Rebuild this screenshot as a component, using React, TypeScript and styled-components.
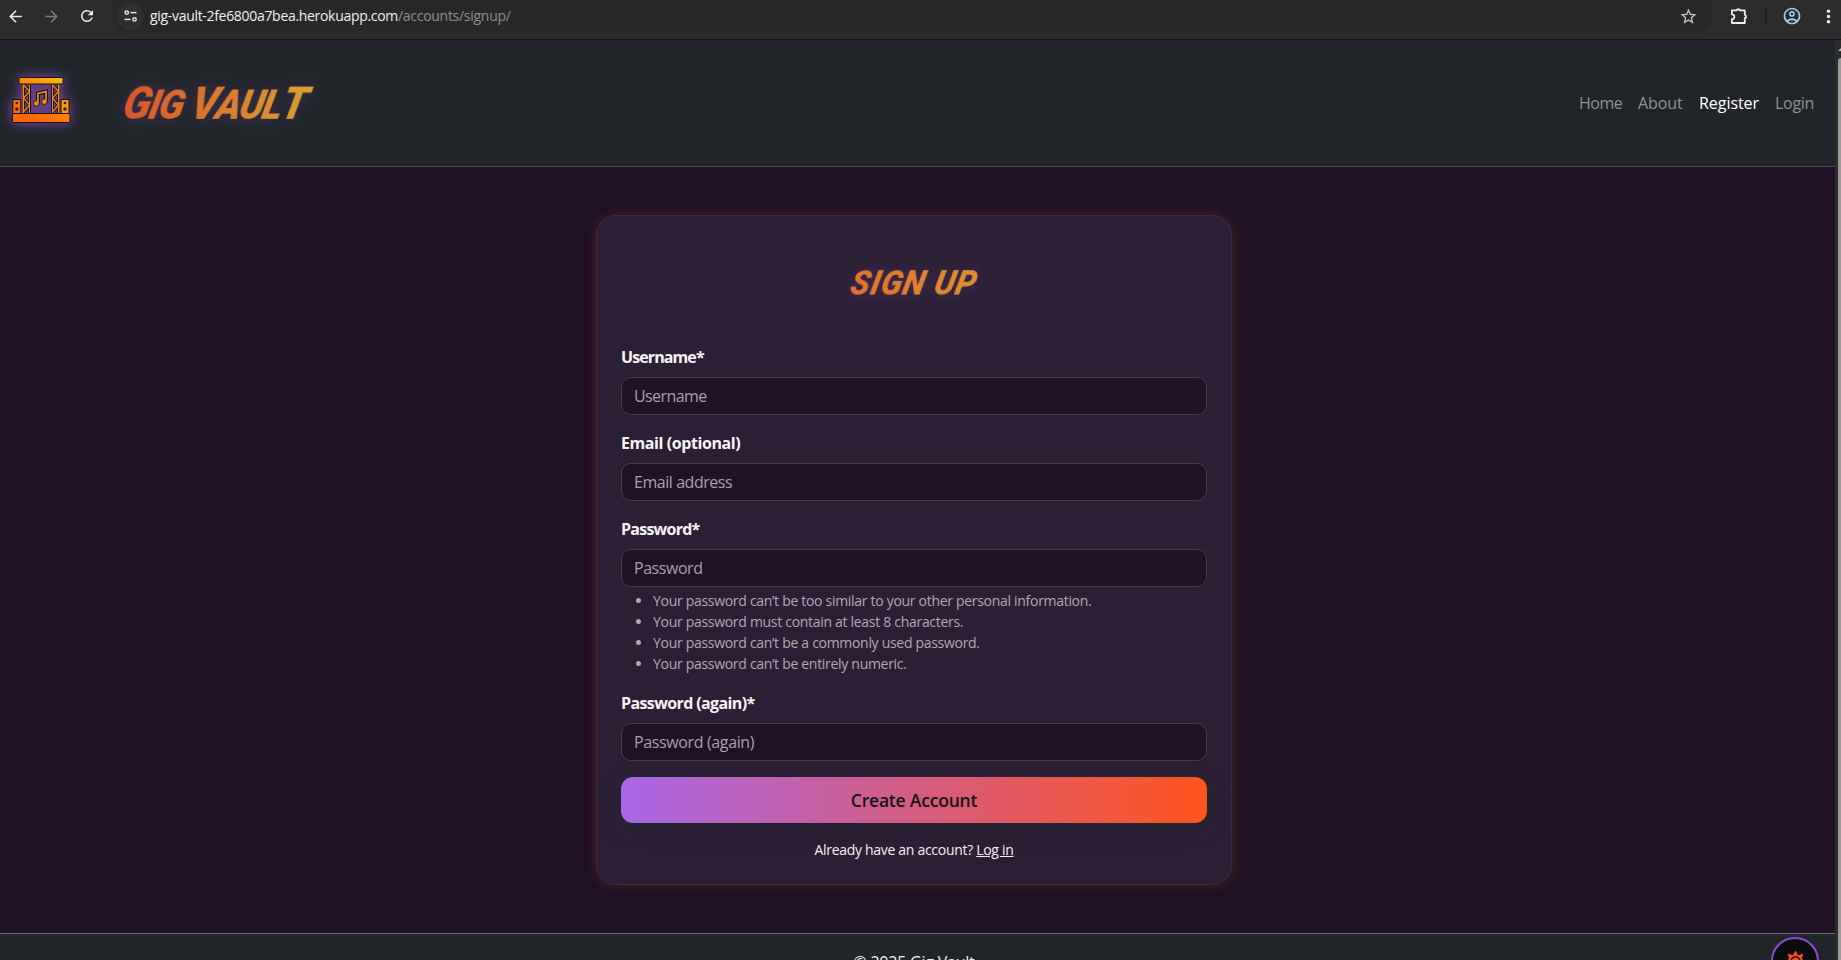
import React from 'react';
import styled, { createGlobalStyle } from 'styled-components';
import { MdArrowBack, MdArrowForward, MdRefresh, MdStarBorder, MdOutlineAccountCircle, MdMoreVert } from 'react-icons/md';
import { FaSun } from 'react-icons/fa';

const GlobalStyle = createGlobalStyle`
  *, *::before, *::after { box-sizing: border-box; }
  body { margin: 0; overflow: hidden; background: #1f1126; font-family: 'Open Sans', 'Noto Sans', sans-serif; }
`;

const Window = styled.div`
  position: relative;
  display: flex;
  flex-direction: column;
  height: 960px;
  overflow: hidden;
  font-size: 16px;
  line-height: 24px;
  color: #f3eff5;
`;

/* Browser toolbar */
const Toolbar = styled.div`
  display: flex;
  height: 40px;
  flex: none;
  background: #2c2c2c;
  border-bottom: 1px solid #151515;
`;
const ToolButton = styled.span<{ $w: number; $color?: string }>`
  display: flex;
  align-items: center;
  justify-content: center;
  flex: none;
  width: ${p => p.$w}px;
  height: 32px;
  color: ${p => p.$color || '#e8e8e8'};
`;
const Leading = styled.div`
  display: flex;
  width: 113px;
  flex: none;
`;
const AddressBar = styled.div`
  display: flex;
  align-items: center;
  flex: none;
  width: 1599px;
  height: 33px;
  padding: 0 14px 1px 4px;
  background: #282828;
  border-radius: 0 0 17px 17px;
`;
const SiteInfo = styled.span`
  display: flex;
  align-items: center;
  justify-content: center;
  width: 27px;
  height: 27px;
  margin-right: 6px;
  border-radius: 50%;
  background: #2f2f2f;
`;
const Url = styled.span`
  flex: 1;
  font-size: 14px;
  letter-spacing: -0.31px;
  color: #f0f0f0;
`;
const UrlPath = styled.span`
  color: #8f8f8f;
  letter-spacing: -0.28px;
`;
const Divider = styled.span`
  width: 2px;
  height: 16px;
  flex: none;
  margin-top: 8px;
  background: #202020;
`;

/* Page */
const Viewport = styled.div`
  display: flex;
  height: 920px;
`;
const Page = styled.div`
  display: flex;
  flex-direction: column;
  width: 1835px;
  height: 920px;
`;
const Scrollbar = styled.div`
  display: flex;
  flex-direction: column;
  align-items: flex-end;
  width: 6px;
  overflow: hidden;
  background: #2c2c2c;
`;
const ScrollArrow = styled.svg`
  width: 3px;
  height: 3px;
  margin: 8px 0 7px;
`;
const ScrollThumb = styled.div`
  width: 3px;
  flex: 1;
  border-top-left-radius: 3px;
  background: #9c9896;
`;

const Header = styled.header`
  display: flex;
  align-items: center;
  height: 127px;
  flex: none;
  padding: 0 21px 0 0;
  background: #212529;
  border-bottom: 1px solid #495057;
`;
const StageLogo = styled.svg`
  width: 84px;
  height: 80px;
  flex: none;
  margin-top: -6px;
  overflow: visible;
  filter: drop-shadow(0 0 6px rgba(146, 78, 214, 0.85));
`;
const Display = styled.span<{ $size: number; $space: string; $from: string; $to: string }>`
  display: inline-block;
  font-family: Roboto, 'Open Sans', sans-serif;
  font-weight: 900;
  font-style: italic;
  font-size: ${p => p.$size}px;
  line-height: 1.3;
  letter-spacing: ${p => p.$space};
  color: transparent;
  background: linear-gradient(90deg, ${p => p.$from}, ${p => p.$to});
  background-clip: text;
  -webkit-background-clip: text;
  transform: skewX(-12deg) scaleY(1.08);
  filter: drop-shadow(0 0 7px rgba(110, 70, 160, 0.35));
  padding: 0 8px;
  white-space: nowrap;
`;
const Brand = styled.div`
  margin: 2px auto 0 32px;
`;
const Big = styled.span`
  font-size: 1.1em;
`;
const Nav = styled.nav`
  display: flex;
  gap: 16px;
`;
const NavLink = styled.a<{ $w: number; $ls: number; $active?: boolean }>`
  width: ${p => p.$w}px;
  letter-spacing: ${p => p.$ls}px;
  white-space: nowrap;
  color: ${p => (p.$active ? '#ffffff' : '#909294')};
`;

const Main = styled.main`
  display: flex;
  justify-content: center;
  align-items: flex-start;
  height: 766px;
  flex: none;
  padding: 48px 7px 0 0;
  background: #1f1126;
`;
const Card = styled.form`
  display: flex;
  flex-direction: column;
  width: 636px;
  height: 670px;
  padding: 24px;
  background: #2c1f35;
  border: 1px solid #3a2946;
  border-radius: 20px;
  box-shadow: -2px 0 16px rgba(255, 85, 30, 0.07), 2px 1px 16px rgba(255, 180, 20, 0.09);
`;
const Title = styled.h1`
  height: 105px;
  margin: 0;
  padding-top: 23px;
  text-align: center;
  line-height: 0;
`;
const Label = styled.label<{ $ls: number }>`
  height: 24px;
  margin-bottom: 8px;
  font-weight: 700;
  letter-spacing: ${p => p.$ls}px;
  color: #f8f5fa;
`;
const Input = styled.input<{ $ls: number }>`
  height: 38px;
  flex: none;
  margin: 0 0 16px;
  padding: 0 12px;
  font: 400 16px/24px 'Open Sans', 'Noto Sans', sans-serif;
  letter-spacing: ${p => p.$ls}px;
  background: #1f1126;
  border: 1px solid #483a44;
  border-radius: 10px;
  color: #fff;
  &::placeholder { color: #a8a1ad; opacity: 1; }
`;
const Hints = styled.ul`
  margin: -13px 0 17px;
  padding-left: 32px;
  font-size: 14px;
  line-height: 21px;
  letter-spacing: -0.3px;
  color: #b0a9b4;
`;
const Submit = styled.button`
  height: 46px;
  flex: none;
  border: 0;
  border-radius: 12px;
  padding: 0 0 1px;
  background: linear-gradient(90deg, #a866e8, #ff531c);
  box-shadow: 0 6px 18px rgba(33, 37, 49, 0.55);
  font: 600 17.6px/26px 'Open Sans', sans-serif;
  letter-spacing: -0.25px;
  color: #141214;
`;
const Switch = styled.p`
  margin: 16px 0 0;
  text-align: center;
  font-size: 14px;
  line-height: 21px;
  letter-spacing: -0.3px;
`;
const LoginLink = styled.a`
  color: inherit;
  text-decoration: underline;
`;
const Footer = styled.footer`
  height: 27px;
  padding: 16px 7px 0 0;
  background: #212529;
  border-top: 1px solid #6c6a76;
  text-align: center;
  letter-spacing: -0.22px;
  overflow: hidden;
  white-space: nowrap;
`;
const ThemeToggle = styled.button`
  position: absolute;
  left: 1771px;
  top: 937px;
  display: flex;
  align-items: center;
  justify-content: center;
  width: 48px;
  height: 48px;
  padding: 0;
  border: 2px solid #8f4bd8;
  border-radius: 50%;
  background: #0b0c0e;
  color: #ff4a1c;
`;

const fields = {
  username: { label: 'Username*', hint: 'Username', ls: -0.9, hs: -0.6 },
  email: { label: 'Email (optional)', hint: 'Email address', ls: -0.42, hs: -0.45 },
  password: { label: 'Password*', hint: 'Password', ls: -0.75, hs: -0.45 },
  again: { label: 'Password (again)*', hint: 'Password (again)', ls: -0.62, hs: -0.37 },
};

function Field({ name }: { name: keyof typeof fields }) {
  const f = fields[name];
  return (
    <>
      <Label $ls={f.ls} htmlFor={name}>{f.label}</Label>
      <Input $ls={f.hs} id={name} placeholder={f.hint} />
    </>
  );
}

function Truss({ x }: { x: number }) {
  return (
    <g transform={`translate(${x} 84)`}>
      <path d="M1 0V30M7 0V30" stroke="#17100c" strokeWidth="3" />
      <path d="M1 1L7 7.500L1 14L7 21L1 28" stroke="#17100c" strokeWidth="3" fill="none" />
      <path d="M1 1L7 7.500L1 14L7 21L1 28" stroke="#f08a18" strokeWidth="1.300" fill="none" />
      <path d="M0.800 0V30M7.200 0V30" stroke="#f98a0c" strokeWidth="1.500" />
    </g>
  );
}

function Speaker({ x, fill }: { x: number; fill: string }) {
  return (
    <g>
      <rect x={x} y="99.500" width="8" height="14" fill={fill} stroke="#17100c" />
      <circle cx={x + 4} cy="103" r="1.300" fill="#3a1c10" />
      <circle cx={x + 4} cy="109" r="1.700" fill="#3a1c10" />
    </g>
  );
}

export default function App() {
  return (
    <Window>
      <GlobalStyle />
      <Toolbar>
        <Leading>
          <ToolButton $w={30}><MdArrowBack size={19} /></ToolButton>
          <ToolButton $w={42} $color="#7b7b7b"><MdArrowForward size={19} /></ToolButton>
          <ToolButton $w={30}><MdRefresh size={18} /></ToolButton>
        </Leading>
        <AddressBar>
          <SiteInfo>
            <svg width="14" height="14" viewBox="0 0 14 14" fill="none" stroke="#e3e3e3" strokeWidth="1.500">
              <circle cx="2.800" cy="3.600" r="1.700" /><path d="M6.500 3.600H12.500" />
              <circle cx="10.500" cy="10.400" r="1.700" /><path d="M0.500 10.400H6.500" />
            </svg>
          </SiteInfo>
          <Url>gig-vault-2fe6800a7bea.herokuapp.com<UrlPath>/accounts/signup/</UrlPath></Url>
          <MdStarBorder size={19} color="#c8c8c8" />
        </AddressBar>
        <ToolButton $w={53}>
          <svg width="18" height="18" viewBox="0 0 18 18" fill="none" stroke="#eeeeee" strokeWidth="1.800" strokeLinejoin="round">
            <path d="M1.900 3.400H6.800A1.500 1.300 0 0 1 9.800 3.400H14.800V7.800A1.300 1.600 0 0 1 14.800 11V16H1.900V12.200A2.400 2.400 0 0 0 1.900 7.300Z" />
          </svg>
        </ToolButton>
        <Divider />
        <ToolButton $w={50} $color="#a8c7fa"><MdOutlineAccountCircle size={20} /></ToolButton>
        <ToolButton $w={22}><MdMoreVert size={21} /></ToolButton>
      </Toolbar>

      <Viewport>
        <Page>
          <Header>
            <StageLogo viewBox="0 60 84 80">
              <defs>
                <linearGradient id="stage" gradientUnits="userSpaceOnUse" x1="35" y1="122" x2="66" y2="76">
                  <stop offset="0" stopColor="#ff6405" /><stop offset="0.500" stopColor="#fb8a06" /><stop offset="1" stopColor="#f8c808" />
                </linearGradient>
              </defs>
              <rect x="22" y="84" width="38" height="30" fill="#603d88" />
              <Truss x={22.500} />
              <Truss x={51.500} />
              <path d="M30.500 84.500V113M51.500 84.500V113" stroke="#17100c" />
              <rect x="19" y="77.500" width="44" height="6.500" rx="1" fill="url(#stage)" stroke="#17100c" />
              <Speaker x={12.800} fill="#f96b08" />
              <Speaker x={61} fill="#f59a0a" />
              <rect x="12.500" y="113.500" width="57.500" height="9" rx="1" fill="url(#stage)" stroke="#17100c" />
              <g fill="none" stroke="#17100c" strokeWidth="4"><path d="M38 103V93.500L46 91.500V101" /></g>
              <g fill="#fb8f0a" stroke="#17100c" strokeWidth="0.800"><circle cx="36.300" cy="103.500" r="2.700" /><circle cx="44.300" cy="101.800" r="2.700" /></g>
              <path d="M38 103V93.500L46 91.500V101" fill="none" stroke="#fb8f0a" strokeWidth="1.700" />
            </StageLogo>
            <Brand>
              <Display $size={38} $space="-1.4px" $from="#d9532b" $to="#dba032"><Big>G</Big>IG <Big>V</Big>AUL<Big>T</Big></Display>
            </Brand>
            <Nav>
              <NavLink $w={43} $ls={-0.5}>Home</NavLink>
              <NavLink $w={45} $ls={-0.1}>About</NavLink>
              <NavLink $w={60} $ls={-0.05} $active>Register</NavLink>
              <NavLink $w={39} $ls={-0.3}>Login</NavLink>
            </Nav>
          </Header>
          <Main>
            <Card>
              <Title><Display $size={32} $space="0.8px" $from="#e0702e" $to="#de922e">SIGN UP</Display></Title>
              <Field name="username" />
              <Field name="email" />
              <Field name="password" />
              <Hints>
                <li>Your password can’t be too similar to your other personal information.</li>
                <li>Your password must contain at least 8 characters.</li>
                <li>Your password can’t be a commonly used password.</li>
                <li>Your password can’t be entirely numeric.</li>
              </Hints>
              <Field name="again" />
              <Submit type="button">Create Account</Submit>
              <Switch>Already have an account? <LoginLink>Log in</LoginLink></Switch>
            </Card>
          </Main>
          <Footer>© 2025 Gig Vault</Footer>
        </Page>
        <Scrollbar>
          <ScrollArrow viewBox="0 0 3 3"><path d="M0 3L3 0V3Z" fill="#b5b2b0" /></ScrollArrow>
          <ScrollThumb />
        </Scrollbar>
      </Viewport>
      <ThemeToggle aria-label="Toggle theme"><FaSun size={21} /></ThemeToggle>
    </Window>
  );
}
